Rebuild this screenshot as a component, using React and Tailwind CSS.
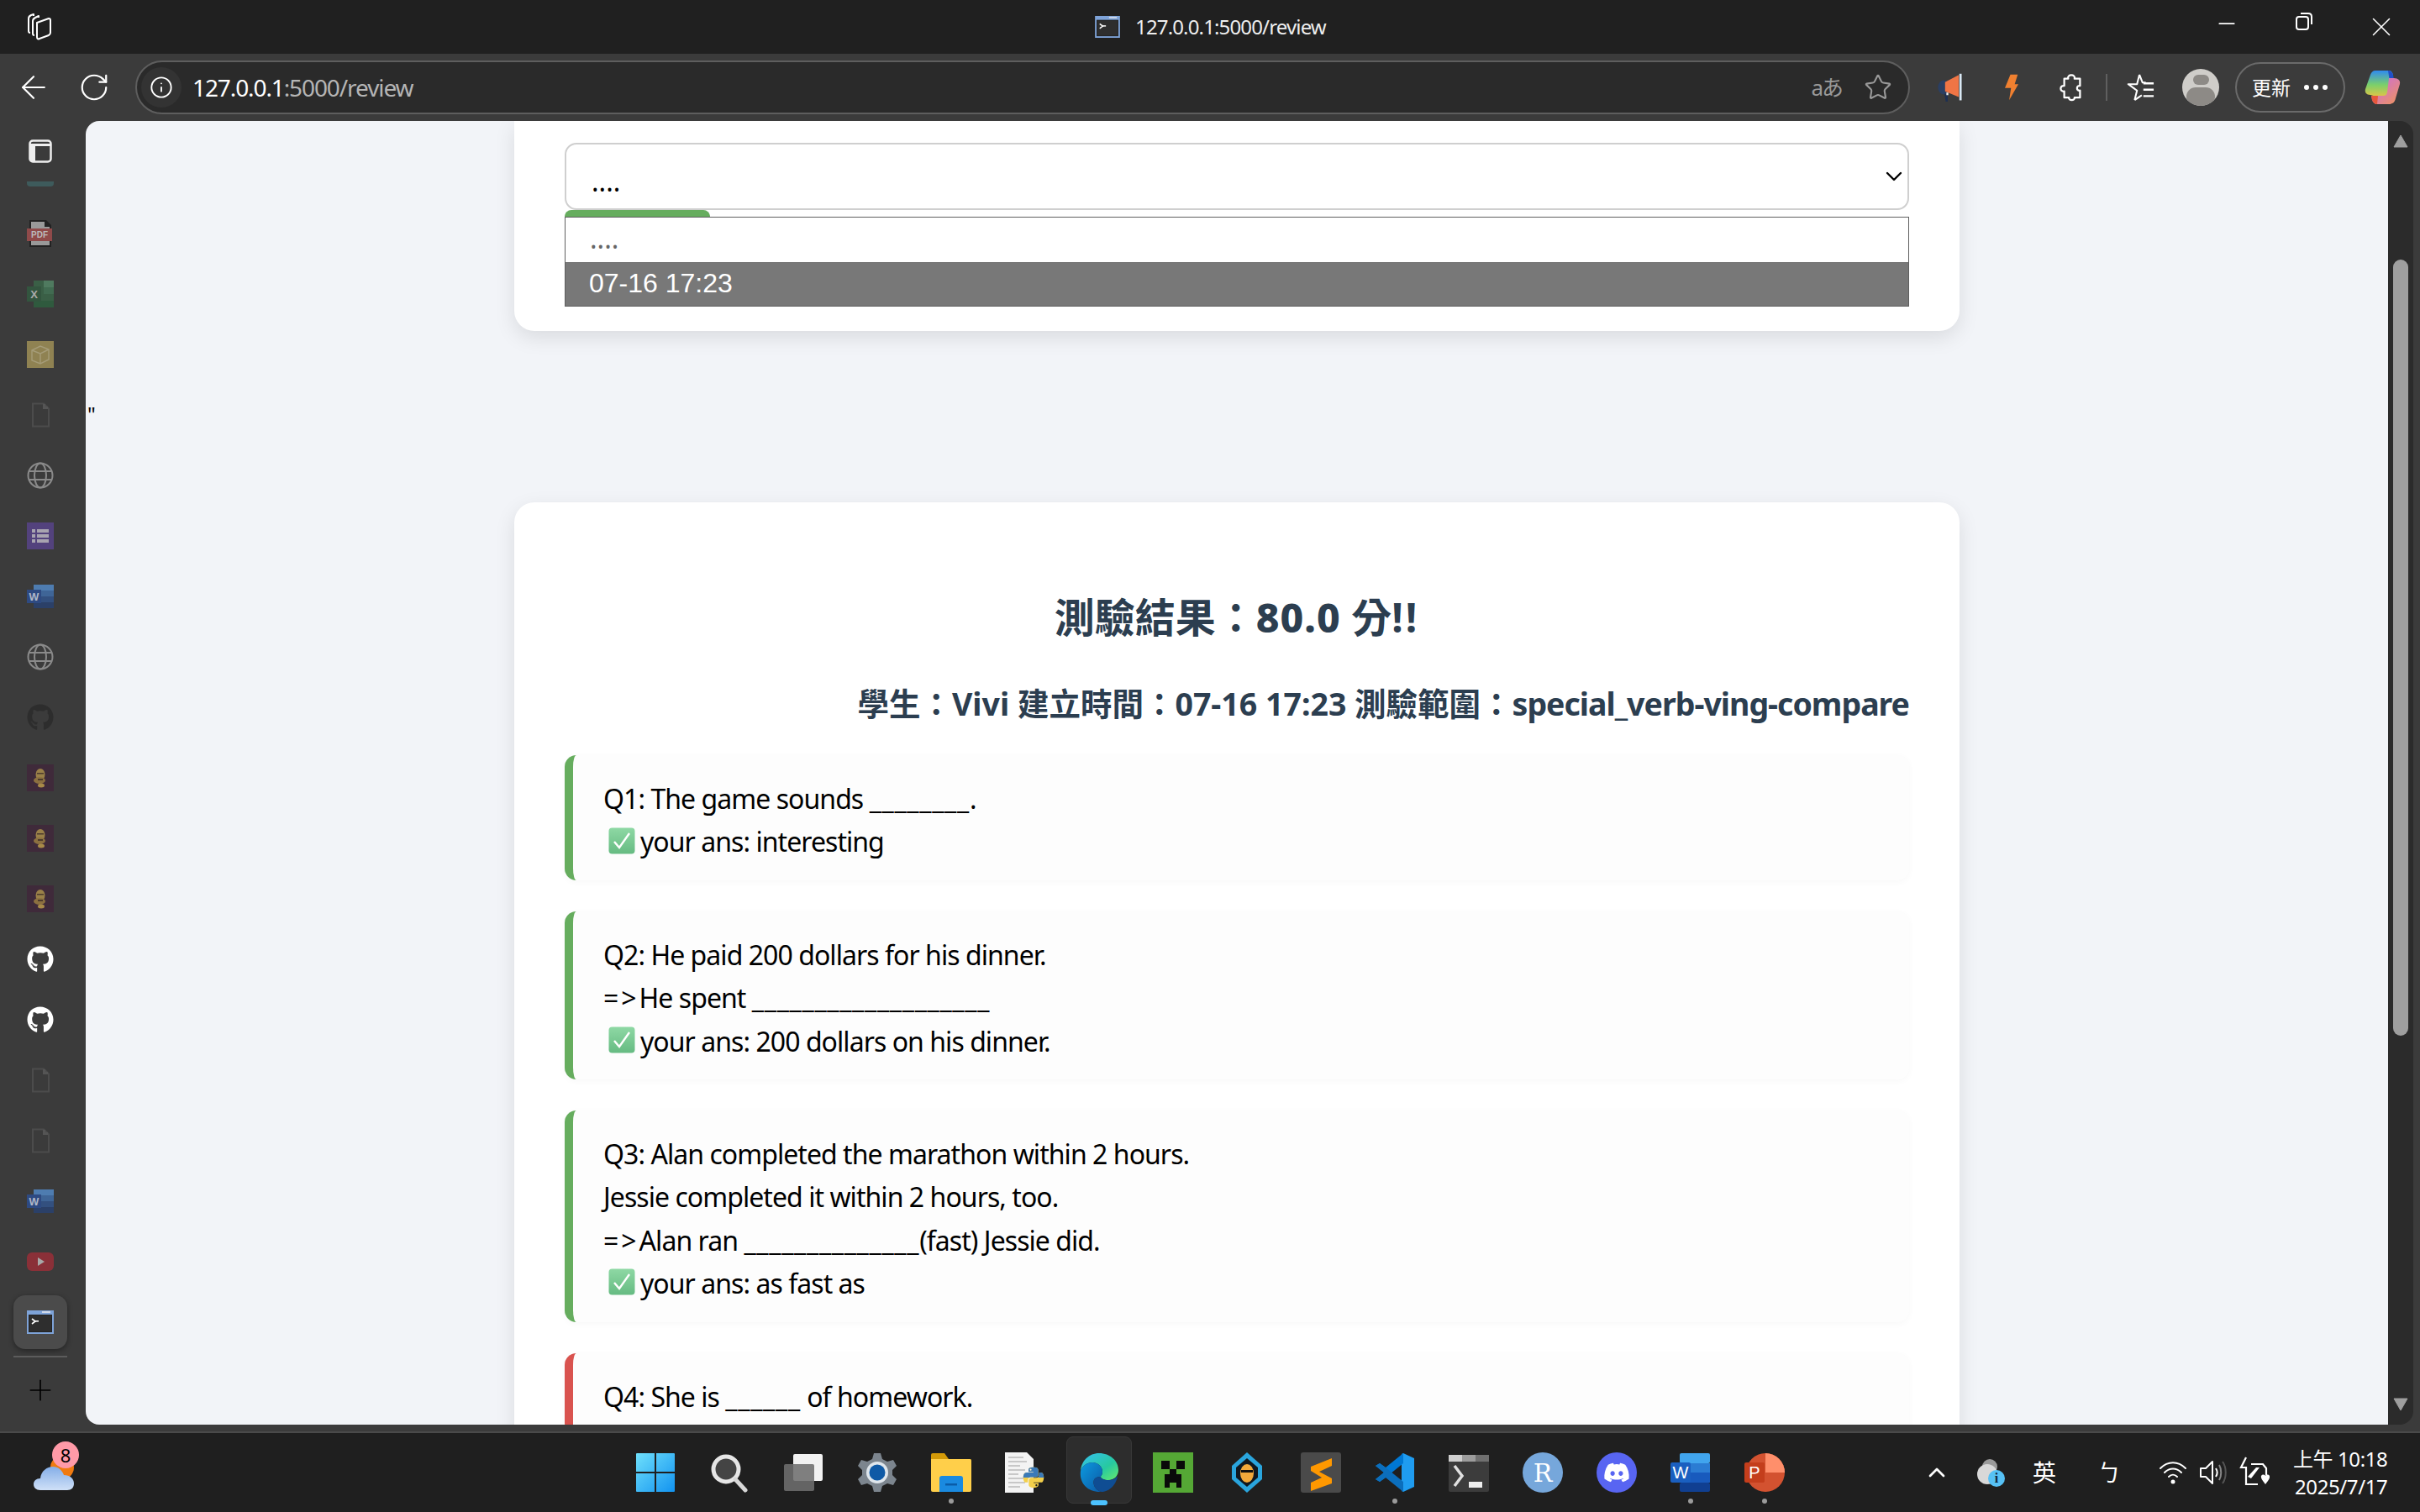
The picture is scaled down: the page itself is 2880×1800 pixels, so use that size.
import React from "react";
import { FaGithub, FaDiscord, FaPython } from "react-icons/fa";
import { ArrowLeft, RotateCw, Info, Star, Minus, X, Plus, ChevronDown, ChevronUp } from "lucide-react";

const Stack = () => (
  <svg width="34" height="34" viewBox="0 0 34 34" fill="none" stroke="#fff" strokeWidth="2" strokeLinejoin="round">
    <path d="M4 7c0-2 1-3 3-4l3-1v2" />
    <path d="M4 7v15c0 1 .5 2 2 2" />
    <path d="M9 10c0-2 1-3 3-4l4-2v2" />
    <path d="M9 10v15c0 1 .5 2 2 2" />
    <path d="M14 12l14-5c1 0 2 1 2 2v15c0 1-.5 2-2 3l-11 4c-2 1-3 0-3-2z" />
  </svg>
);
const TermWin = ({ w = 32, h = 28 }) => (
  <svg width={w} height={h} viewBox="0 0 32 28">
    <rect width="32" height="28" fill="#7ea3d8" />
    <rect x="2" y="5" width="28" height="21" fill="#222" />
    <rect x="3" y="6" width="26" height="19" fill="#2e2e2e" />
    <rect x="18" y="1" width="10" height="2" fill="#cfd8e8" />
    <path d="M6 10l4 3-4 3" stroke="#fff" strokeWidth="1.6" fill="none" />
    <rect x="10" y="12" width="4" height="1.6" fill="#fff" />
  </svg>
);
const Toggle = () => (
  <svg width="28" height="28" viewBox="0 0 28 28" fill="none">
    <rect x="1.5" y="1.5" width="25" height="25" rx="3.5" stroke="#eee" strokeWidth="2.5" />
    <rect x="1.5" y="5" width="25" height="3" fill="#eee" />
    <rect x="2" y="8" width="6" height="18" fill="#eee" />
  </svg>
);
const Pdf = () => (
  <svg width="32" height="32" viewBox="0 0 32 32">
    <path d="M3 0h20l6 6v26H3z" fill="#222" />
    <path d="M5 2h16v6h6v22H5z" fill="#999" />
    <rect y="10" x="0" width="30" height="15" fill="#8f4a4a" />
    <text x="15" y="21" textAnchor="middle" fontSize="10" fontWeight="700" fill="#bbb" fontFamily="Liberation Sans, sans-serif">PDF</text>
  </svg>
);
const Excel = () => (
  <svg width="32" height="32" viewBox="0 0 32 32">
    <rect x="8" y="0" width="24" height="32" fill="#3a5f46" />
    <rect x="20" y="0" width="12" height="8" fill="#4f7a5f" />
    <rect x="20" y="8" width="12" height="8" fill="#416b51" />
    <rect x="8" y="24" width="24" height="8" fill="#2f5a3e" />
    <rect x="0" y="7" width="17" height="18" fill="#33553f" />
    <text x="8.5" y="21" textAnchor="middle" fontSize="13" fontWeight="700" fill="#aaa" fontFamily="Liberation Sans, sans-serif">X</text>
  </svg>
);
const BoxIcon = () => (
  <svg width="32" height="32" viewBox="0 0 32 32" fill="none">
    <rect width="32" height="32" fill="#8f8252" />
    <path d="M6 11l10-5 10 4v12l-10 5-10-4zM6 11l10 4 10-5M16 15v12" stroke="#a59c78" strokeWidth="1.4" />
  </svg>
);
const FileIcon = () => (
  <svg width="32" height="32" viewBox="0 0 32 32" fill="none">
    <path d="M7 2.5h13l6 6v21H7z" stroke="#4c4c4c" strokeWidth="2" />
    <path d="M19 3h3v3h3v3h-6z" fill="#555" />
  </svg>
);
const Globe = () => (
  <svg width="32" height="32" viewBox="0 0 32 32" fill="none" stroke="#8a8a8a" strokeWidth="2">
    <circle cx="16" cy="16" r="14.5" />
    <ellipse cx="16" cy="16" rx="7" ry="14.5" />
    <path d="M2 11h28M2 21h28" />
  </svg>
);
const ListIcon = () => (
  <svg width="32" height="32" viewBox="0 0 32 32">
    <rect y="0" width="32" height="32" fill="#53427d" />
    <path d="M6 8h4v4H6zM12 8h14v4H12zM6 14h4v4H6zM12 14h14v4H12zM6 20h4v4H6zM12 20h14v4H12z" fill="#a8a4b0" />
  </svg>
);
const WordSmall = () => (
  <svg width="32" height="28" viewBox="0 0 32 28">
    <rect x="8" y="0" width="24" height="7" fill="#4e7cb0" />
    <rect x="8" y="7" width="24" height="7" fill="#3f6597" />
    <rect x="8" y="14" width="24" height="7" fill="#33507f" />
    <rect x="8" y="21" width="24" height="7" fill="#2b4068" />
    <rect x="0" y="6" width="17" height="16" fill="#2e4a82" />
    <text x="8.5" y="19" textAnchor="middle" fontSize="12.5" fontWeight="700" fill="#b0b8c8" fontFamily="Liberation Sans, sans-serif">W</text>
  </svg>
);
const Face = () => (
  <svg width="32" height="32" viewBox="0 0 32 32">
    <rect width="32" height="32" fill="#3f2a3a" />
    <ellipse cx="16" cy="12" rx="5.5" ry="7" fill="#9a8048" />
    <rect x="12" y="10" width="8" height="1.5" fill="#4d3b2c" />
    <ellipse cx="15" cy="19" rx="7" ry="4" fill="#8c7040" />
    <rect x="13" y="17" width="6" height="2" fill="#4d3b2c" />
    <ellipse cx="17" cy="25" rx="4" ry="2.5" fill="#a88a48" />
  </svg>
);
const Youtube = () => (
  <svg width="32" height="22" viewBox="0 0 32 22">
    <rect width="32" height="22" rx="6" fill="#8a3038" />
    <path d="M13 6l8 5-8 5z" fill="#a8a8a8" />
  </svg>
);

const Win = () => (
  <svg width="46" height="46" viewBox="0 0 46 46">
    <defs>
      <linearGradient id="wg" x1="0" y1="0" x2="1" y2="1">
        <stop offset="0" stopColor="#6fe0fb" />
        <stop offset="1" stopColor="#1293f0" />
      </linearGradient>
    </defs>
    <path d="M0 1a1 1 0 011-1h21v22H0zM24 0h21a1 1 0 011 1v21H24zM0 24h22v22H1a1 1 0 01-1-1zM24 24h22v21a1 1 0 01-1 1H24z" fill="url(#wg)" />
  </svg>
);
const Search = () => (
  <svg width="48" height="48" viewBox="0 0 48 48" fill="none">
    <circle cx="20" cy="20" r="15" fill="#444" stroke="#e6e6e6" strokeWidth="5" />
    <path d="M31 32l12 13" stroke="#d8d8d8" strokeWidth="5" strokeLinecap="round" />
  </svg>
);
const TaskView = () => (
  <svg width="48" height="48" viewBox="0 0 48 48">
    <rect x="12" y="2" width="35" height="32" rx="2" fill="#f2f2f2" />
    <rect x="1" y="14" width="36" height="32" rx="2" fill="#6e6e6e" opacity=".88" />
  </svg>
);
const Gear = () => (
  <svg width="48" height="48" viewBox="0 0 48 48">
    <path d="M20 1h8l2 7 6 3 7-2 4 7-5 5v6l5 5-4 7-7-2-6 3-2 7h-8l-2-7-6-3-7 2-4-7 5-5v-6l-5-5 4-7 7 2 6-3z" fill="#7c858e" />
    <circle cx="24" cy="24" r="13" fill="#dfe6ec" />
    <circle cx="24" cy="24" r="9.5" fill="#0f5aa6" />
  </svg>
);
const Folder = () => (
  <svg width="48" height="46" viewBox="0 0 48 46">
    <path d="M0 2a2 2 0 012-2h14l5 7h25a2 2 0 012 2v4H0z" fill="#d39a08" />
    <path d="M0 7h46a2 2 0 012 2v35a2 2 0 01-2 2H2a2 2 0 01-2-2z" fill="#ffcf4a" />
    <path d="M10 30a3 3 0 013-3h22a3 3 0 013 3v16H10z" fill="#1a8ae0" />
    <rect x="17" y="36" width="14" height="2.5" fill="#0a5ca8" />
  </svg>
);
const PyFile = () => (
  <div className="relative w-[48px] h-[48px]">
    <svg width="36" height="48" viewBox="0 0 36 48" className="absolute left-0 top-0">
      <path d="M0 0h26l8 8v40H0z" fill="#f3f3f3" />
      <path d="M4 6h18M4 11h22M4 16h14M4 21h20M4 26h12M4 31h18M4 36h20M4 41h14" stroke="#bbb" strokeWidth="1.4" />
    </svg>
    <FaPython className="absolute left-[20px] top-[16px] text-[#f3cf4a]" size={28} />
    <FaPython className="absolute left-[20px] top-[16px] text-[#3b7ab8] [clip-path:inset(0_0_50%_0)]" size={28} />
  </div>
);
const Edge = () => (
  <svg width="48" height="48" viewBox="0 0 48 48">
    <defs>
      <linearGradient id="eg1" x1="0" y1="0" x2="1" y2="1">
        <stop offset="0" stopColor="#35c1f1" />
        <stop offset=".6" stopColor="#27c9a0" />
        <stop offset="1" stopColor="#66eb6e" />
      </linearGradient>
      <linearGradient id="eg2" x1="0" y1="0" x2="1" y2="1">
        <stop offset="0" stopColor="#0c9ae0" />
        <stop offset="1" stopColor="#0c59a4" />
      </linearGradient>
    </defs>
    <path d="M2 22C3 10 12 1 24 1c13 0 23 9 23 20 0 7-5 12-12 12-5 0-9-2-9-4 0-1 2-2 2-6 0-6-5-11-12-11-6 0-12 4-14 10z" fill="url(#eg1)" />
    <path d="M2 22c2-6 8-10 14-10 7 0 12 5 12 11 0 4-2 5-2 6-7 0-10 4-8 10 1 4 5 7 9 8C12 48 0 38 2 22z" fill="url(#eg2)" />
    <path d="M18 39c-2-6 1-10 8-10 0 2 4 4 9 4 5 0 9-2 11-5-1 9-9 19-19 19-4-1-8-4-9-8z" fill="#0f4d93" />
  </svg>
);
const Creeper = () => (
  <svg width="48" height="48" viewBox="0 0 48 48">
    <rect width="48" height="48" fill="#55a835" />
    <path d="M10 10h10v10H10zM28 10h10v10H28zM20 20h8v6h6v16h-6v-6h-8v6h-6V26h6z" fill="#0a0a0a" />
  </svg>
);
const Lion = () => (
  <svg width="48" height="48" viewBox="0 0 48 48">
    <path d="M24 0l18 16v16L24 48 6 32V16z" fill="#2aa5dd" />
    <path d="M24 7l13 11v12L24 41 11 30V18z" fill="#101820" />
    <ellipse cx="24" cy="25" rx="8" ry="11" fill="#f2a93b" />
    <rect x="17" y="21" width="14" height="3" fill="#111" />
  </svg>
);
const Sublime = () => (
  <svg width="48" height="48" viewBox="0 0 48 48">
    <rect width="48" height="48" rx="3" fill="#4a4a4a" />
    <path d="M37 7v9L22 23l15 8v6L12 46V36l13-6-13-8v-5z" fill="#ff9800" />
  </svg>
);
const VsCode = () => (
  <svg width="48" height="48" viewBox="0 0 48 48">
    <path d="M34 1l13 6v34l-13 6-2-1V2z" fill="#1f9cf0" />
    <path d="M34 1v12L13 30l-7 5-5-3 10-8L1 16l5-3 7 5z" fill="#0078d4" />
    <path d="M34 47V35L13 18l-7-5-5 3 10 8-10 8 5 3 7-5z" fill="#0b6ebc" />
  </svg>
);
const TermApp = () => (
  <svg width="48" height="48" viewBox="0 0 48 48">
    <rect y="3" width="48" height="44" rx="2" fill="#3c3c3c" />
    <rect y="3" width="16" height="8" fill="#cfcfcf" />
    <rect x="16" y="3" width="16" height="8" fill="#9c9c9c" />
    <rect x="32" y="3" width="16" height="8" fill="#707070" />
    <path d="M7 16l9 12-9 12" stroke="#e0e0e0" strokeWidth="3.5" fill="none" />
    <rect x="24" y="35" width="16" height="7" fill="#eee" />
  </svg>
);
const Word = () => (
  <div className="relative w-[48px] h-[48px]">
    <svg width="48" height="48" viewBox="0 0 48 48" className="absolute inset-0">
      <rect x="11" y="1" width="36" height="12" rx="2" fill="#41a5ee" />
      <rect x="11" y="13" width="36" height="11" fill="#2b7cd3" />
      <rect x="11" y="24" width="36" height="12" fill="#185abd" />
      <rect x="11" y="36" width="36" height="11" rx="2" fill="#103f91" />
      <rect y="12" width="24" height="24" rx="2" fill="#1a5fc0" />
    </svg>
    <span className="absolute left-0 top-[12px] w-[24px] text-center text-[20px] leading-[24px] font-['Liberation_Sans',sans-serif] text-white">W</span>
  </div>
);
const Ppt = () => (
  <div className="relative w-[48px] h-[48px]">
    <svg width="48" height="48" viewBox="0 0 48 48" className="absolute inset-0">
      <circle cx="25" cy="24" r="23" fill="#d35230" />
      <path d="M25 1a23 23 0 0123 23H25z" fill="#ff8f6b" />
      <rect y="12" width="24" height="24" rx="2" fill="#c43e1c" />
    </svg>
    <span className="absolute left-0 top-[12px] w-[24px] text-center text-[20px] leading-[24px] font-['Liberation_Sans',sans-serif] text-white">P</span>
  </div>
);
const RApp = () => (
  <div className="w-[48px] h-[48px] rounded-full bg-[#76a7db] flex items-center justify-center text-white text-[30px] font-['DejaVu_Serif',serif]">R</div>
);
const Discord = () => (
  <div className="w-[48px] h-[48px] rounded-full bg-[#5865f2] flex items-center justify-center text-white"><FaDiscord size={32} /></div>
);
const Copilot = () => (
  <svg width="44" height="42" viewBox="0 0 44 42">
    <defs>
      <linearGradient id="cp1" x1="0" y1="0" x2="0" y2="1">
        <stop offset="0" stopColor="#2f8bf0" />
        <stop offset=".5" stopColor="#7bd06a" />
        <stop offset="1" stopColor="#f5c23e" />
      </linearGradient>
      <linearGradient id="cp2" x1="0" y1="0" x2="1" y2="1">
        <stop offset="0" stopColor="#c668e8" />
        <stop offset="1" stopColor="#f0955a" />
      </linearGradient>
    </defs>
    <path d="M14 1h16c3 0 4 2 5 5l-6 26c-1 2-2 3-4 3L8 30c-5 0-7-3-6-7L8 6c1-3 3-5 6-5z" fill="url(#cp1)" />
    <path d="M29 1c3 0 5 2 6 5l1 6-5 2z" fill="#2050c8" />
    <path d="M30 10h6c5 0 8 3 7 7l-5 17c-1 5-4 7-8 7H16c-3 0-5-2-6-5l-1-5h14c3 0 4-1 5-4z" fill="url(#cp2)" />
    <path d="M9 31h8l-1 10c-3 0-5-2-6-5z" fill="#e6573c" />
  </svg>
);
const Megaphone = () => (
  <svg width="32" height="34" viewBox="0 0 40 44">
    <ellipse cx="10" cy="22" rx="9" ry="11" fill="#2a3f63" />
    <path d="M12 14l21-11v34l-21-9z" fill="#f07545" />
    <rect x="34" y="1" width="3.5" height="41" fill="#d9e8f5" />
    <path d="M11 32h5v12h-3z" fill="#1d2f52" />
    <rect x="14" y="30" width="3" height="4" fill="#eee" />
  </svg>
);
const Bolt = () => (
  <svg width="20" height="32" viewBox="0 0 24 44">
    <path d="M10 1h12l-5 16h6L8 43l3-20H1z" fill="#f08030" />
  </svg>
);
const Puzzle = () => (
  <svg width="30" height="34" viewBox="0 0 32 36" fill="none" stroke="#fff" strokeWidth="2.4" strokeLinejoin="round">
    <path d="M6 7h5c-2-6 10-6 8 0h7v9c-5-1-5 7 0 6v9h-7c1 4-8 4-7 0H6v-8c-6 1-6-8 0-7z" />
  </svg>
);
const FavList = () => (
  <svg width="34" height="34" viewBox="0 0 36 36" fill="none" stroke="#fff" strokeWidth="2.2" strokeLinejoin="round">
    <path d="M17 2l4 10h4M11 34l3-12-11-8h11l3-12M11 34l9-6" />
    <path d="M22 13h13M22 21h13M22 29h13" strokeWidth="2.6" />
  </svg>
);
const Avatar = () => (
  <div className="w-[44px] h-[44px] rounded-full bg-[#cfcdc9] overflow-hidden flex flex-col items-center">
    <div className="w-[19px] h-[19px] mt-[7px] rounded-full bg-[#8d8a86]" />
    <div className="w-[34px] h-[34px] mt-[3px] rounded-full bg-[#8d8a86]" />
  </div>
);
const Cloud = () => (
  <div className="relative w-[56px] h-[48px]">
    <div className="absolute left-[20px] top-[4px] w-[28px] h-[28px] rounded-full bg-[#f07a10]" />
    <svg width="48" height="32" viewBox="0 0 48 32" className="absolute left-0 top-[14px]">
      <defs>
        <linearGradient id="cl" x1="0" y1="0" x2="0" y2="1">
          <stop offset="0" stopColor="#84aee8" />
          <stop offset="1" stopColor="#cfe0f7" />
        </linearGradient>
      </defs>
      <path d="M8 31C3 31 0 28 0 24s3-7 8-7c1-9 8-14 15-14 6 0 11 4 13 10 7 0 12 4 12 10 0 5-3 8-8 8z" fill="url(#cl)" />
    </svg>
  </div>
);
const Wifi = () => (
  <svg width="34" height="30" viewBox="0 0 34 30" fill="none" stroke="#fff" strokeWidth="2" strokeLinecap="round">
    <path d="M2 10c9-9 21-9 30 0M7 15c6-6 14-6 20 0M12 20c3-3 7-3 10 0" />
    <circle cx="17" cy="26" r="2.5" fill="#fff" stroke="none" />
  </svg>
);
const Speaker = () => (
  <svg width="34" height="34" viewBox="0 0 34 34" fill="none" strokeWidth="2">
    <path d="M2 12h6l8-8v26l-8-8H2z" stroke="#fff" strokeLinejoin="round" />
    <path d="M20 12c2 3 2 7 0 10" stroke="#fff" />
    <path d="M24 8c3 5 3 13 0 18" stroke="#888" />
    <path d="M28 4c5 7 5 19 0 26" stroke="#555" />
  </svg>
);
const Battery = () => (
  <svg width="36" height="38" viewBox="0 0 36 38" fill="none" stroke="#fff" strokeWidth="2.2">
    <path d="M8 1L2 13h6v20h14M14 9h14l4 5v8" />
    <path d="M10 24l10-11h4L14 26z" fill="#fff" stroke="none" />
    <path d="M26 23c2-3 5-1 5 0 0-1 3-3 5 0 1 3-3 7-5 10-2-3-6-7-5-10z" fill="#fff" stroke="none" />
  </svg>
);
const OneDrive = () => (
  <div className="relative w-[34px] h-[32px]">
    <div className="absolute left-[6px] top-0 w-[18px] h-[18px] rounded-full bg-[#9a9a9a]" />
    <div className="absolute left-0 top-[6px] w-[24px] h-[24px] rounded-full bg-[#d8d8d8]" />
    <div className="absolute left-[13px] top-[13px] w-[20px] h-[20px] rounded-full bg-[#56c1f5] text-[#10283a] text-[16px] leading-[20px] font-bold text-center font-['Liberation_Serif',serif]">i</div>
  </div>
);
const Check = () => (
  <svg width="32" height="32" viewBox="0 0 32 32" className="mr-[6px] shrink-0">
    <defs>
      <linearGradient id="ck" x1="0" y1="0" x2="0" y2="1">
        <stop offset="0" stopColor="#8ed8a4" />
        <stop offset="1" stopColor="#66bb82" />
      </linearGradient>
    </defs>
    <rect x="0.5" y="0.5" width="31" height="31" rx="4" fill="url(#ck)" />
    <path d="M7 17l6 7L25 7" stroke="#fff" strokeWidth="2.4" fill="none" />
  </svg>
);

const sideIcons = [<Pdf />, <Excel />, <BoxIcon />, <FileIcon />, <Globe />, <ListIcon />, <WordSmall />, <Globe />,
  <FaGithub size={32} className="text-[#2d2d2d]" />, <Face />, <Face />, <Face />,
  <FaGithub size={32} className="text-white" />, <FaGithub size={32} className="text-white" />, <FileIcon />, <FileIcon />, <WordSmall />, <Youtube />];

const apps = [
  [<Win />, 0], [<Search />, 0], [<TaskView />, 0], [<Gear />, 0], [<Folder />, 1], [<PyFile />, 0], [<Edge />, 2], [<Creeper />, 0],
  [<Lion />, 0], [<Sublime />, 0], [<VsCode />, 1], [<TermApp />, 0], [<RApp />, 0], [<Discord />, 0], [<Word />, 1], [<Ppt />, 1],
];

const questions = [
  { c: "border-[#66ad5e]", lines: ["Q1: The game sounds ________."], a: "your ans: interesting" },
  { c: "border-[#66ad5e]", lines: ["Q2: He paid 200 dollars for his dinner.", "=>He spent ___________________"], a: "your ans: 200 dollars on his dinner." },
  { c: "border-[#66ad5e]", lines: ["Q3: Alan completed the marathon within 2 hours.", "Jessie completed it within 2 hours, too.", "=>Alan ran ______________(fast) Jessie did."], a: "your ans: as fast as" },
  { c: "border-[#d9534f]", lines: ["Q4: She is ______ of homework."], a: null },
];

const Line = ({ text }) => (
  <>
    {text.split(/(_+|=>)/).map((part, i) =>
      part.startsWith("_") ? <span key={i} className="tracking-[0.7px]">{part}</span>
      : part === "=>" ? <span key={i} className="tracking-[3px]">{part}</span>
      : <span key={i}>{part}</span>
    )}
  </>
);

export default function App() {
  return (
    <div className="w-[2880px] h-[1800px] overflow-hidden flex flex-col bg-[#3b3b3b] font-['Noto_Sans','Noto_Sans_CJK_TC',sans-serif]">
      {/* title bar */}
      <div className="h-[64px] shrink-0 bg-[#202020] flex items-center text-white">
        <div className="w-[94px] flex justify-center"><Stack /></div>
        <div className="ml-[1208px] flex items-center">
          <TermWin w={32} h={26} />
          <span className="ml-[17px] text-[24px] leading-[32px] text-[#eee] tracking-[-0.85px]">127.0.0.1:5000/review</span>
        </div>
        <div className="ml-auto flex">
          <div className="w-[92px] flex justify-center"><Minus size={30} strokeWidth={1.4} /></div>
          <div className="w-[92px] flex justify-center">
            <svg width="24" height="24" viewBox="0 0 24 24" fill="none" stroke="#fff" strokeWidth="2">
              <rect x="3" y="7" width="14" height="15" rx="3" />
              <path d="M8 3h9c3 0 4 2 4 4v9" />
            </svg>
          </div>
          <div className="w-[92px] flex justify-center"><X size={38} strokeWidth={1} /></div>
        </div>
      </div>

      {/* toolbar */}
      <div className="h-[80px] shrink-0 flex items-center text-white">
        <div className="w-[80px] flex justify-center"><ArrowLeft size={44} strokeWidth={1.2} /></div>
        <div className="w-[64px] flex justify-center"><RotateCw size={38} strokeWidth={1.4} /></div>
        <div className="ml-[17px] w-[2112px] h-[64px] rounded-full border-2 border-[#5e5e5e] bg-[#2a2a2a] flex items-center pr-[19px]">
          <div className="ml-[5px] w-[48px] h-[48px] rounded-full bg-[#333] flex items-center justify-center"><Info size={28} strokeWidth={1.6} /></div>
          <span className="ml-[13px] text-[28px] leading-[40px] tracking-[-1.1px]">127.0.0.1<span className="text-[#b5b5b5]">:5000/review</span></span>
          <span className="ml-auto text-[26px] leading-[32px] text-[#999] tracking-[-2px]">aあ</span>
          <Star size={34} strokeWidth={1.5} className="ml-[26px] text-[#999]" />
        </div>
        <div className="ml-[32px]"><Megaphone /></div>
        <div className="ml-[47px]"><Bolt /></div>
        <div className="ml-[47px]"><Puzzle /></div>
        <div className="ml-[25px] w-[2px] h-[32px] bg-[#5f5f5f]" />
        <div className="ml-[22px]"><FavList /></div>
        <div className="ml-[33px]"><Avatar /></div>
        <div className="ml-[19px] w-[131px] h-[60px] rounded-full border-2 border-[#6a6a6a] flex items-center pl-[18px]">
          <span className="text-[23px] leading-[30px]">更新</span>
          <span className="ml-[16px] flex gap-[5px]">
            <i className="w-[6px] h-[6px] rounded-full bg-white" /><i className="w-[6px] h-[6px] rounded-full bg-white" /><i className="w-[6px] h-[6px] rounded-full bg-white" />
          </span>
        </div>
        <div className="ml-[22px]"><Copilot /></div>
      </div>

      {/* middle */}
      <div className="h-[1552px] shrink-0 flex">
        {/* sidebar */}
        <div className="w-[102px] shrink-0 flex flex-col items-center pr-[6px]">
          <div className="h-[72px] flex items-center justify-center"><Toggle /></div>
          <div className="w-[32px] h-[6px] rounded-b-[4px] bg-[#3e5b5c]" />
          <div className="h-[20px] shrink-0" />
          {sideIcons.map((ic, i) => (
            <div key={i} className="h-[72px] shrink-0 flex items-center justify-center">{ic}</div>
          ))}
          <div className="h-[64px] w-[64px] shrink-0 mt-[4px] rounded-[14px] bg-[#4b4b4b] shadow-[0_2px_6px_rgba(0,0,0,0.4)] flex items-center justify-center"><TermWin /></div>
          <div className="w-[64px] h-[2px] mt-[8px] bg-[#5c5c5c]" />
          <div className="mt-[19px]"><Plus size={40} strokeWidth={1} /></div>
        </div>

        {/* page */}
        <div className="w-[2740px] shrink-0 overflow-hidden rounded-l-[16px] bg-[#f2f4f8]">
          <div className="relative mx-auto w-[1720px] h-[250px] rounded-b-[24px] bg-white shadow-[0_8px_24px_rgba(0,0,0,0.1)] pt-[26px] px-[60px]">
            <div className="h-[80px] rounded-[14px] border-2 border-[#cfcfcf] pl-[30px] flex items-center justify-between text-black text-[32px] leading-[40px]">
              <span className="mt-[12px]">....</span>
              <ChevronDown size={32} strokeWidth={1.8} />
            </div>
            <div className="w-[173px] h-[8px] rounded-t-[10px] bg-[#66ad5e]" />
            <div className="absolute left-[60px] right-[60px] top-[114px] h-[107px] border border-[#5f5f5f] bg-white flex flex-col">
              <div className="h-[53px] pl-[29px] text-[#666] text-[32px] leading-[50px]">....</div>
              <div className="flex-1 bg-[#787878] pl-[28px] text-white text-[32px] leading-[51px] font-['Liberation_Sans',sans-serif]">07-16 17:23</div>
            </div>
          </div>
          <div className="h-[204px] pl-[2px] pt-[85px] text-black text-[24px] leading-[28px]">"</div>
          <div className="mx-auto w-[1720px] rounded-t-[24px] bg-white shadow-[0_8px_24px_rgba(0,0,0,0.1)] pt-[105px] px-[60px] text-black">
            <h2 className="text-center text-[48px] leading-[64px] font-bold text-[#2c3e50]">測驗結果：<span className="font-extrabold tracking-[1px]">80.0</span> 分<span className="tracking-[3px]">!!</span></h2>
            <h3 className="mt-[45px] text-right text-[37.5px] leading-[52px] font-bold text-[#2c3e50]">學生：Vivi 建立時間：07-16 17:23 測驗範圍：<span className="tracking-[-1px]">special_verb-ving-compare</span></h3>
            <div className="mt-[35px] flex flex-col gap-[37px]">
              {questions.map((q, i) => (
                <div key={i} className={"rounded-[14px] border-l-[10px] bg-[#fdfdfd] shadow-[0_2px_8px_rgba(0,0,0,0.03)] pl-[36px] pt-[26px] pb-[20px] text-[32px] leading-[51.4px] tracking-[-0.95px] " + q.c}>
                  {q.lines.map((l, j) => <div key={j}><Line text={l} /></div>)}
                  {q.a && <div className="flex items-center pl-[6px]"><span className="-mt-[3px]"><Check /></span>{q.a}</div>}
                </div>
              ))}
            </div>
          </div>
        </div>

        {/* scrollbar */}
        <div className="w-[30px] shrink-0 rounded-r-[16px] bg-[#2b2b2b] flex flex-col items-center">
          <svg width="18" height="16" viewBox="0 0 18 16" className="mt-[16px] shrink-0"><path d="M9 1l8 14H1z" fill="#9f9f9f" stroke="#9f9f9f" strokeLinejoin="round" /></svg>
          <div className="w-[18px] h-[924px] mt-[133px] rounded-full bg-[#9f9f9f]" />
          <svg width="18" height="16" viewBox="0 0 18 16" className="mt-auto mb-[16px] shrink-0"><path d="M9 15l8-14H1z" fill="#9f9f9f" stroke="#9f9f9f" strokeLinejoin="round" /></svg>
        </div>
      </div>

      {/* taskbar */}
      <div className="mt-[8px] h-[96px] shrink-0 border-t-2 border-[#4a4a4a] bg-[#1f1f1f] flex items-center text-white">
        <div className="w-[736px] shrink-0 pl-[40px] relative h-full flex items-center">
          <Cloud />
          <div className="absolute left-[62px] top-[10px] w-[32px] h-[32px] rounded-full bg-[#ff9aa8] flex items-center justify-center text-black text-[22px] leading-[32px]">8</div>
        </div>
        <div className="flex">
          {apps.map(([ic, dot], i) => (
            <div key={i} className="relative w-[88px] h-[94px] flex items-center justify-center">
              {dot === 2 && <div className="absolute left-[5px] top-[4px] w-[78px] h-[80px] rounded-[8px] bg-[#2d2d2d] border border-[#383838]" />}
              <div className="relative">{ic}</div>
              {dot === 1 && <div className="absolute left-[41px] bottom-[10px] w-[6px] h-[6px] rounded-full bg-[#9b9b9b]" />}
              {dot === 2 && <div className="absolute left-[34px] bottom-[8px] w-[20px] h-[6px] rounded-full bg-[#4cc2ff]" />}
            </div>
          ))}
        </div>
        <div className="ml-[133px] w-[56px] flex justify-center"><ChevronUp size={32} strokeWidth={2} /></div>
        <div className="ml-[5px] w-[64px] flex justify-center"><OneDrive /></div>
        <div className="w-[62px] text-center text-[28px] leading-[36px]">英</div>
        <div className="ml-[16px] w-[60px] text-center text-[28px] leading-[36px]">ㄅ</div>
        <div className="ml-[22px] w-[48px] flex justify-center"><Wifi /></div>
        <div className="w-[48px] flex justify-center"><Speaker /></div>
        <div className="w-[50px] flex justify-center"><Battery /></div>
        <div className="ml-[21px] flex flex-col items-end text-[24px] leading-[33px] text-white tracking-[-0.4px]">
          <span>上午 10:18</span>
          <span>2025/7/17</span>
        </div>
      </div>
    </div>
  );
}
